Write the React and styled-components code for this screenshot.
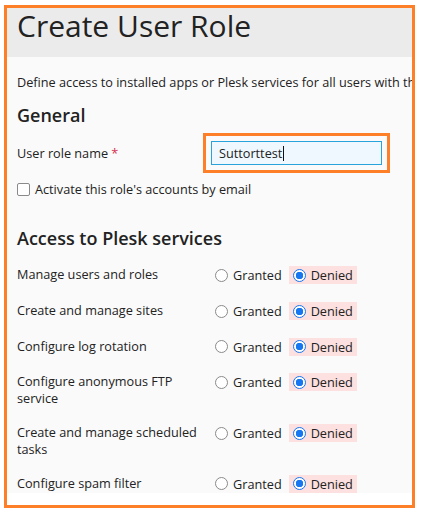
import React from 'react'
import styled, { createGlobalStyle } from 'styled-components';

const GlobalStyle = createGlobalStyle`
    body {
        margin: 0;
        background: #fff;
        font-family: "Open Sans", "Liberation Sans", sans-serif;
        font-size: 12.7px;
        color: #222;
    }
`

const Frame = styled.div`
    box-sizing: border-box;
    width: 411px;
    margin: 5px 0 0 4px;
    border: 3px solid #fd7f28;
    background: #fff;
    padding-bottom: 12px;
`

const Header = styled.div`
    height: 49px;
    box-sizing: border-box;
    background: #ebebeb;
    padding: 0 10px;
`

const Title = styled.h1`
    margin: 0;
    font-size: 30px;
    font-weight: 400;
    line-height: 35px;
    color: #222;
`

const Content = styled.div`
    height: 436px;
    overflow: hidden;
    background: #fafafa;
    padding: 16px 0 0 10px;
    box-sizing: border-box;
`

const Intro = styled.p`
    margin: 0;
    line-height: 18px;
    white-space: nowrap;
`

const SectionTitle = styled.h2`
    margin: ${props => props.top}px 0 0 0;
    font-size: 18px;
    font-weight: 600;
    line-height: 24px;
`

const FieldRow = styled.div`
    display: flex;
    align-items: center;
    margin-top: 14px;
`

const FieldLabel = styled.label`
    width: 194px;
    line-height: 18px;
`

const Required = styled.span`
    color: #d6304f;
`

const Annotated = styled.div`
    outline: 3px solid #fd7f28;
    outline-offset: 5px;
`

const Field = styled.div`
    box-sizing: border-box;
    width: 171px;
    height: 24px;
    padding: 0 7px;
    display: flex;
    align-items: center;
    border: 1px solid #29a3dc;
    background: #eff8fe;
    line-height: 18px;
`

const Caret = styled.span`
    display: inline-block;
    width: 1px;
    height: 15px;
    margin-left: 1px;
    background: #111;
`

const CheckRow = styled.label`
    display: flex;
    align-items: center;
    gap: 5px;
    margin-top: 15px;
    line-height: 18px;
`

const Checkbox = styled.span`
    box-sizing: border-box;
    width: 13px;
    height: 13px;
    border: 1px solid #8a8a8a;
    border-radius: 2px;
    background: #fff;
`

const List = styled.div`
    margin-top: 7px;
    display: flex;
    flex-direction: column;
`

const ServiceRow = styled.div`
    display: flex;
    align-items: flex-start;
    padding: 8px 0;
    &:nth-child(n+3) { margin-top: -0.3px; }
`

const ServiceName = styled.div`
    width: 194px;
    padding-top: 1px;
    line-height: 17px;
`

const Choices = styled.div`
    display: flex;
    align-items: center;
    height: 20px;
    gap: 3px;
`

const Choice = styled.label`
    display: flex;
    align-items: center;
    gap: 5px;
    height: 18px;
    padding: 0 4px;
    line-height: 18px;
    background: ${props => props.highlight ? '#fde0e0' : 'transparent'};
`

const Radio = styled.span`
    box-sizing: border-box;
    width: 13px;
    height: 13px;
    border-radius: 50%;
    border: 1px solid ${props => props.checked ? '#1677f0' : '#8a8a8a'};
    background: ${props => props.checked ? 'radial-gradient(circle, #1677f0 0 3.5px, #fff 4px)' : '#fff'};
`

const services = [
    'Manage users and roles',
    'Create and manage sites',
    'Configure log rotation',
    'Configure anonymous FTP service',
    'Create and manage scheduled tasks',
    'Configure spam filter',
]

const Service = ({ name }) => (
    <ServiceRow>
        <ServiceName>{name}</ServiceName>
        <Choices>
            <Choice>
                <Radio />
                Granted
            </Choice>
            <Choice highlight>
                <Radio checked />
                Denied
            </Choice>
        </Choices>
    </ServiceRow>
)

export default function App() {
    return (
        <>
            <GlobalStyle />
            <Frame>
                <Header>
                    <Title>Create User Role</Title>
                </Header>
                <Content>
                    <Intro>Define access to installed apps or Plesk services for all users with this role.</Intro>
                    <SectionTitle top={12}>General</SectionTitle>
                    <FieldRow>
                        <FieldLabel>User role name <Required>*</Required></FieldLabel>
                        <Annotated>
                            <Field>
                                Suttorttest<Caret />
                            </Field>
                        </Annotated>
                    </FieldRow>
                    <CheckRow>
                        <Checkbox />
                        Activate this role's accounts by email
                    </CheckRow>
                    <SectionTitle top={28}>Access to Plesk services</SectionTitle>
                    <List>
                        {services.map(name => <Service key={name} name={name} />)}
                    </List>
                </Content>
            </Frame>
        </>
    )
}
